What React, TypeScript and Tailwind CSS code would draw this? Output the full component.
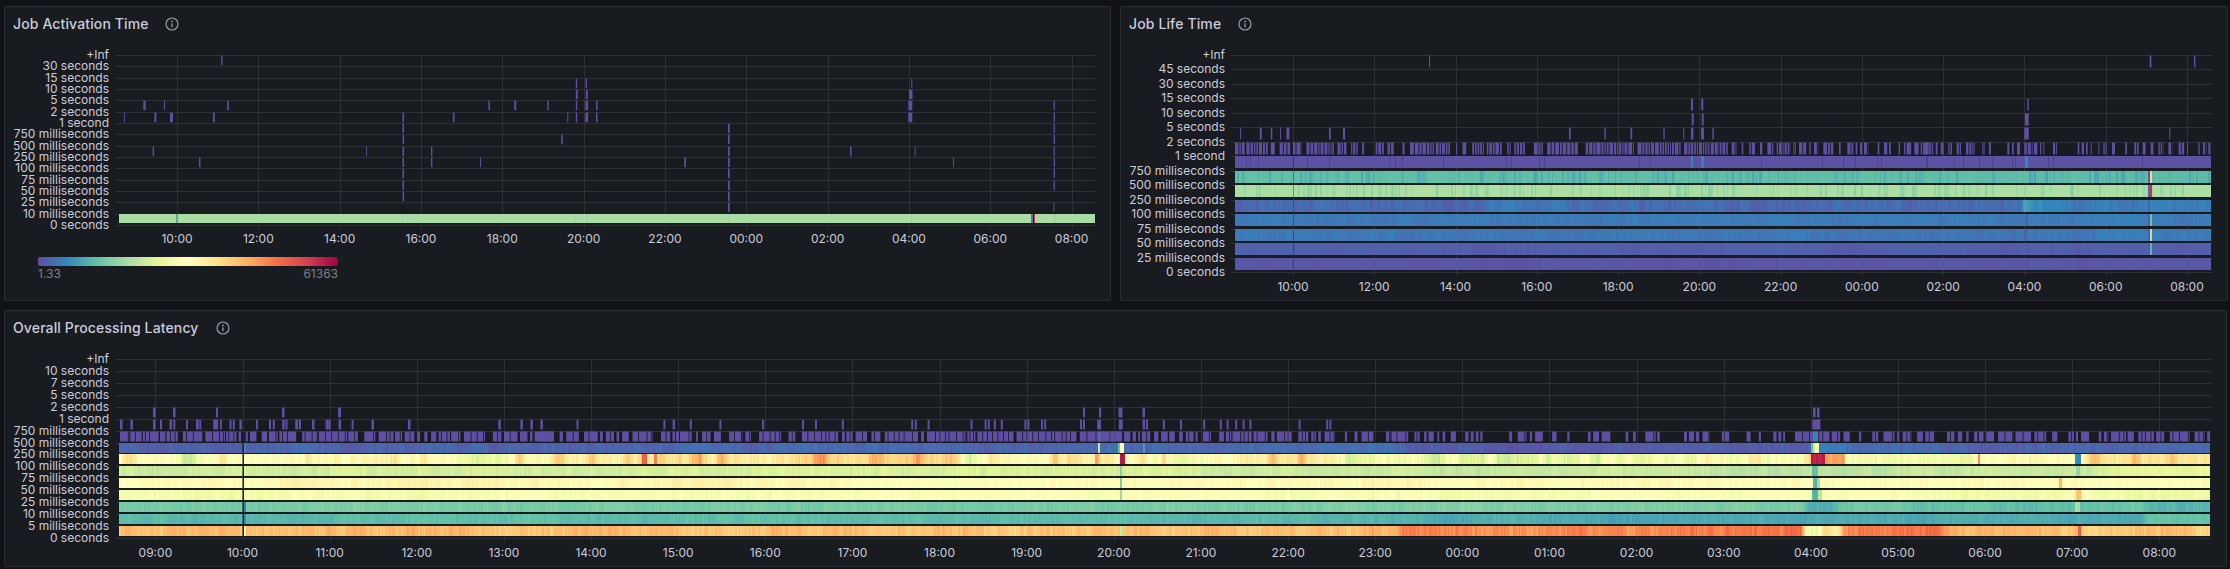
import React from "react";

type Tick = [number, number];
type Spike = [number, number, number];
type Key = [number, number];

const STOPS = [
  [94, 79, 162], [50, 136, 189], [102, 194, 165], [171, 221, 164], [230, 245, 152], [255, 255, 191],
  [254, 224, 139], [253, 174, 97], [244, 109, 67], [213, 62, 79], [158, 1, 66],
];

function spectral(t: number): string {
  const c = Math.max(0, Math.min(0.9999, t)) * 10;
  const i = Math.floor(c);
  const f = c - i;
  const a = STOPS[i];
  const b = STOPS[i + 1];
  const m = (k: number) => Math.round(a[k] + (b[k] - a[k]) * f);
  return `rgb(${m(0)},${m(1)},${m(2)})`;
}

function rng(seed: number) {
  let a = seed >>> 0;
  return () => {
    a = (a + 0x6d2b79f5) >>> 0;
    let t = a;
    t = Math.imul(t ^ (t >>> 15), t | 1);
    t ^= t + Math.imul(t ^ (t >>> 7), t | 61);
    return ((t ^ (t >>> 14)) >>> 0) / 4294967296;
  };
}

function keyAt(keys: Key[], x: number): number {
  if (x <= keys[0][0]) return keys[0][1];
  for (let i = 1; i < keys.length; i++) {
    if (x <= keys[i][0]) {
      const [x0, t0] = keys[i - 1];
      const [x1, t1] = keys[i];
      return t0 + ((t1 - t0) * (x - x0)) / Math.max(0.001, x1 - x0);
    }
  }
  return keys[keys.length - 1][1];
}

type BandOpts = {
  x0: number; x1: number; y: number; h: number; cell: number; seed: number;
  keys: Key[]; amp: number; spikes?: Spike[]; stripeP?: number; stripeD?: number; burstP?: number; burstD?: number;
};

function Band({ x0, x1, y, h, cell, seed, keys, amp, spikes = [], stripeP = 0, stripeD = 0, burstP = 0, burstD = 0 }: BandOpts) {
  const r = rng(seed);
  const n = Math.ceil((x1 - x0) / cell) + 2;
  const white = Array.from({ length: n }, () => r() * 2 - 1);
  const stripe = Array.from({ length: n }, () => (r() < stripeP ? stripeD * (0.5 + r() * 0.5) : 0));
  const midN = Array.from({ length: Math.ceil(n / 6) + 2 }, () => r() * 2 - 1);
  const slowN = Array.from({ length: Math.ceil(n / 40) + 2 }, () => r() * 2 - 1);
  const burst = Array.from({ length: Math.ceil(n / 5) + 2 }, () => (r() < burstP ? burstD * (0.4 + r() * 0.6) : 0));
  const interp = (arr: number[], p: number) => {
    const i = Math.floor(p);
    const f = p - i;
    return arr[i] * (1 - f) + arr[i + 1] * f;
  };
  const rects: React.ReactElement[] = [];
  let start = x0;
  let cur = "";
  const push = (end: number) => {
    if (cur && end > start) rects.push(<rect key={start} x={start} y={y} width={end - start} height={h} fill={cur} />);
  };
  for (let x = x0; x < x1; x++) {
    const c = Math.floor((x - x0) / cell);
    let t =
      keyAt(keys, x) +
      amp * (0.45 * white[c] + 0.35 * interp(midN, c / 6) + 0.35 * interp(slowN, c / 40)) +
      stripe[c] +
      interp(burst, c / 5);
    for (const s of spikes) if (x >= s[0] && x < s[1]) t = s[2] + amp * 0.3 * white[c];
    const col = spectral(Math.round(t * 200) / 200);
    if (col !== cur) {
      push(x);
      start = x;
      cur = col;
    }
  }
  push(x1);
  return <g shapeRendering="crispEdges">{rects}</g>;
}

function blockTicks(blocks: number[][], sc: number, off: number, seed: number, minRun: number, maxRun: number, gap: number): Tick[] {
  const r = rng(seed);
  const out: Tick[] = [];
  for (const [a, b] of blocks) {
    let x = a / sc + off;
    const end = b / sc + off;
    while (x < end) {
      const w = minRun + r() * (maxRun - minRun);
      const e = Math.min(end, x + w);
      out.push([x, e - x]);
      x = e + gap;
    }
  }
  return out;
}

function Ticks({ ticks, y, h, t = 0 }: { ticks: Tick[]; y: number; h: number; t?: number }) {
  return (
    <g fill={spectral(t)}>
      {ticks.map(([x, w], i) => (
        <rect key={i} x={x} y={y} width={w} height={h} />
      ))}
    </g>
  );
}

function Axes({ left, gridL, gridR, gridT, ys, labels, hours, labelY }: {
  left: number; gridL: number; gridR: number; gridT: number; ys: number[]; labels: string[]; hours: [string, number][]; labelY: number;
}) {
  const bottom = ys[ys.length - 1];
  return (
    <>
      <g shapeRendering="crispEdges" stroke="#2e3035" strokeWidth={1}>
        {ys.map((y) => <line key={y} x1={gridL} x2={gridR} y1={y + 0.5} y2={y + 0.5} />)}
        {hours.map(([l, x]) => {
          const px = Math.round(x) + 0.5;
          return <line key={l} x1={px} x2={px} y1={gridT + 0.5} y2={bottom + 4} />;
        })}
      </g>
      <g className="fill-[#ccccdc] text-[12px]">
        {labels.map((l, i) => (
          <text key={l} x={left} y={ys[i] + 4} textAnchor="end">{l}</text>
        ))}
        {hours.map(([l, x]) => (
          <text key={l} x={x} y={labelY + 4} textAnchor="middle">{l}</text>
        ))}
      </g>
    </>
  );
}

function InfoIcon() {
  return (
    <svg width="14" height="14" viewBox="0 0 14 14" fill="none" className="block">
      <circle cx="7" cy="7" r="6" stroke="#9c9ca6" strokeWidth="1.2" />
      <circle cx="7" cy="4.4" r="0.85" fill="#9c9ca6" />
      <rect x="6.35" y="6.2" width="1.3" height="4" rx="0.5" fill="#9c9ca6" />
    </svg>
  );
}

function Panel({ title, iconGap, className, children }: { title: string; iconGap: string; className: string; children: React.ReactNode }) {
  return (
    <div className={`border border-[#2b2d32] rounded-[2px] bg-[#181b1f] flex flex-col overflow-hidden ${className}`}>
      <div className="h-[33px] shrink-0 pl-[8px] flex items-center">
        <h2 className="text-[14px] font-medium text-[#ccccdc] tracking-[0.13px]">{title}</h2>
        <div className={iconGap}><InfoIcon /></div>
      </div>
      {children}
    </div>
  );
}

/* ---------- Panel 1 ---------- */
const P1Y = Array.from({ length: 16 }, (_, i) => Math.round(55 + 11.333 * i));
const P1L = ["+Inf", "30 seconds", "15 seconds", "10 seconds", "5 seconds", "2 seconds", "1 second", "750 milliseconds", "500 milliseconds", "250 milliseconds", "100 milliseconds", "75 milliseconds", "50 milliseconds", "25 milliseconds", "10 milliseconds", "0 seconds"];
const P1H: [string, number][] = ["10:00", "12:00", "14:00", "16:00", "18:00", "20:00", "22:00", "00:00", "02:00", "04:00", "06:00", "08:00"].map((l, i) => [l, 177 + i * 81.33]);
const A: Tick = [402.5, 1.6];
const B: Tick = [728, 1.7];
const C: Tick = [1053.6, 1.3];
const P1T: Tick[][] = [
  [[221.2, 1.3]],
  [],
  [[575.8, 1.4], [585.7, 1.3], [911.3, 1]],
  [[575.8, 2], [585.8, 2], [909, 3.5]],
  [[143.3, 2.4], [164, 1], [227.1, 1.7], [488.4, 1.5], [514.2, 2], [547.3, 1.4], [575.8, 1.4], [585.3, 2.8], [596, 1.5], [908.3, 4], C],
  [[124, 0.9], [154.4, 2], [170, 3], [212.9, 1.8], A, [452.9, 1.6], [567.3, 1], [575.8, 1.4], [585.3, 2.8], [596, 1.5], [908.3, 4], C],
  [A, B, C],
  [A, [561.2, 1.6], B, C],
  [[152.6, 1.4], [366, 0.9], A, [431, 1.4], B, [850, 1.5], [914.7, 0.9], C],
  [[199, 1.5], A, [431, 1.4], [480, 1], [684.3, 1.7], B, [953, 0.9], C],
  [A, B, C],
  [A, B, C],
  [A, B],
  [B, [1053.4, 1]],
];

/* ---------- Panel 2 ---------- */
const P2Y = Array.from({ length: 16 }, (_, i) => Math.round(55 + 14.47 * i));
const P2L = ["+Inf", "45 seconds", "30 seconds", "15 seconds", "10 seconds", "5 seconds", "2 seconds", "1 second", "750 milliseconds", "500 milliseconds", "250 milliseconds", "100 milliseconds", "75 milliseconds", "50 milliseconds", "25 milliseconds", "0 seconds"];
const P2H: [string, number][] = ["10:00", "12:00", "14:00", "16:00", "18:00", "20:00", "22:00", "00:00", "02:00", "04:00", "06:00", "08:00"].map((l, i) => [l, 1293 + i * 81.27]);
const P2T0: Tick[] = [[1429, 1], [2149.6, 1.8], [2194, 1.4]];
const P2T3: Tick[] = [[1691, 2], [1701.3, 2], [2027.3, 1.5]];
const P2T4: Tick[] = [[1691.7, 2], [1701.7, 2], [2025, 3.8]];
const P2T5: Tick[] = [[1240.1, 1], [1259.8, 2], [1270.8, 1.5], [1280, 1], [1286.4, 3], [1329, 1.8], [1343, 2], [1569, 1.8], [1604.4, 1.4], [1630.4, 1.8], [1663.4, 1.3], [1683.3, 1], [1691, 2.4], [1701, 3], [1712.4, 1.4], [2024.3, 4.5], [2169.3, 1]];
const P2R6: Tick[] = [
  ...blockTicks([[378, 405], [410, 470], [478, 490], [503, 535], [540, 565], [578, 655], [665, 690], [703, 722], [734, 742], [772, 795], [805, 825], [847, 855], [868, 935], [940, 980], [997, 1000], [1015, 1028], [1042, 1075], [1083, 1125], [1140, 1150], [1160, 1190], [1215, 1240], [1252, 1338], [1360, 1495], [1505, 1568]], 2.8, 1100, 71, 1, 4.2, 0.9),
  ...blockTicks([[0, 62], [72, 90], [92, 140], [143, 148], [152, 178], [180, 204], [215, 232], [245, 250], [268, 285], [300, 307], [322, 340], [350, 392], [400, 408], [417, 440], [448, 452], [462, 475], [490, 520], [537, 542], [562, 580], [587, 592], [600, 606], [612, 625], [653, 658], [672, 682], [687, 693], [716, 720], [750, 755], [763, 770], [794, 810], [827, 833], [842, 848], [856, 720]], 3, 1660, 72, 1, 4, 0.9),
  ...blockTicks([[12, 16], [20, 30], [48, 56], [62, 102], [127, 131], [145, 156], [170, 183], [198, 225], [247, 255], [267, 273], [322, 328], [336, 342], [351, 360], [373, 398], [402, 412], [420, 424], [430, 433], [459, 471], [533, 538], [545, 553], [558, 563], [572, 575], [595, 598], [610, 620], [636, 645], [676, 681], [703, 716], [728, 738], [752, 760], [775, 790], [805, 817], [836, 855], [861, 866], [895, 899], [909, 919], [925, 933]], 3, 1900, 73, 1, 3.5, 0.9),
];
const P2Slits = [410, 420, 443, 540, 580, 642, 810, 826, 845, 961, 1138, 1152, 1228, 1244, 1510].map((v) => v / 2.8 + 1100)
  .concat([31, 364, 547, 610, 646, 710, 724, 858].map((v) => v / 3 + 1640))
  .concat([80, 163, 190, 238, 275, 335, 345, 445, 460, 727].map((v) => v / 3 + 1900));

/* ---------- Panel 3 ---------- */
const P3Y = Array.from({ length: 16 }, (_, i) => Math.round(359 + 11.93 * i));
const P3L = ["+Inf", "10 seconds", "7 seconds", "5 seconds", "2 seconds", "1 second", "750 milliseconds", "500 milliseconds", "250 milliseconds", "100 milliseconds", "75 milliseconds", "50 milliseconds", "25 milliseconds", "10 milliseconds", "5 milliseconds", "0 seconds"];
const P3H: [string, number][] = ["09:00", "10:00", "11:00", "12:00", "13:00", "14:00", "15:00", "16:00", "17:00", "18:00", "19:00", "20:00", "21:00", "22:00", "23:00", "00:00", "01:00", "02:00", "03:00", "04:00", "05:00", "06:00", "07:00", "08:00"].map((l, i) => [l, 155.4 + i * 87.13]);
const P3R4: Tick[] = [[153, 2.5], [173, 2.5], [216, 2], [282, 2.5], [338, 3], [1083, 2], [1099, 2.2], [1118.5, 4], [1142.5, 2.5], [1813, 2.6], [1817, 2.6]];
const P3R5: Tick[] = [
  [120, 2.5], [130.4, 2.5], [153, 2.5], [160, 2], [169.5, 2.5], [173.3, 2], [186, 2], [196, 2.8], [199.4, 1.8], [213.2, 2.8], [216, 2], [219.8, 2], [229.5, 2], [232.8, 2], [239.4, 2.5], [256, 2], [269, 2], [272.8, 2], [282.2, 2.5], [285.5, 2], [295.2, 3], [299, 2], [312, 2.5], [325.6, 3], [328.6, 2], [338.6, 2.5], [351.6, 2], [371.5, 2.5], [408, 2.5], [498.3, 2.5], [520.4, 2.5], [530.4, 2.5], [540.4, 2.5],
  [576.5, 2], [663.4, 2], [672.6, 2.5], [689.8, 2], [719.4, 2], [762, 2], [802, 2], [815, 2], [841.8, 2], [911.2, 2], [914.8, 2], [927.6, 2], [970.5, 2], [984.6, 2], [987.8, 2], [993.8, 2], [1000.8, 2], [1024.4, 2], [1027.4, 2], [1041, 2], [1044.2, 2], [1080, 2], [1083, 2], [1097.2, 3.8], [1118.8, 4],
  [1142.6, 2.5], [1146, 2], [1162.8, 2], [1180, 2], [1203.2, 2], [1219.8, 2], [1226.6, 2], [1235.2, 2], [1242.6, 2], [1249.4, 2], [1298.6, 2], [1326.2, 2], [1329.4, 2], [1812.4, 8],
];
const P3R6: Tick[] = [
  ...blockTicks([[336, 362], [365, 398], [400, 445], [448, 463], [466, 500], [512, 568], [575, 630], [633, 662], [668, 675], [688, 694], [700, 718], [733, 748], [753, 778], [782, 830], [846, 890], [893, 972], [975, 1002], [1020, 1051], [1060, 1102], [1106, 1126], [1133, 1160], [1168, 1176], [1188, 1197], [1207, 1224], [1228, 1260], [1263, 1289], [1299, 1358], [1380, 1404], [1411, 1449], [1456, 1477], [1484, 1491], [1497, 1551]], 2.8, 0, 81, 2, 9, 0.8),
  ...blockTicks([[0, 38], [53, 62], [71, 105], [119, 156], [162, 170], [178, 200], [207, 214], [222, 240], [250, 304], [327, 352], [358, 410], [422, 427], [438, 463], [470, 491], [511, 547], [555, 570], [592, 652], [672, 690], [708, 806], [816, 824], [828, 845], [853, 884], [896, 920], [932, 1022], [1030, 1038], [1046, 1150], [1155, 1177], [1182, 1280], [1288, 1450], [1459, 1540], [1542, 1568]], 2.703, 540, 82, 2, 9, 0.8),
  ...blockTicks([[0, 20], [28, 44], [48, 60], [65, 82], [88, 97], [103, 108], [113, 138], [146, 158], [165, 183], [187, 203], [214, 224], [232, 253], [258, 264], [278, 300], [322, 335], [340, 355], [358, 410], [415, 453], [463, 472], [478, 498], [500, 518], [536, 563], [571, 584], [590, 597], [607, 635], [662, 668], [688, 698], [707, 739], [773, 785], [788, 833], [850, 864], [876, 883], [888, 903], [912, 917], [926, 933], [948, 962], [987, 996], [1002, 1010], [1016, 1024], [1028, 1034], [1106, 1116], [1129, 1153], [1162, 1168], [1176, 1199], [1222, 1234], [1263, 1269], [1319, 1326], [1333, 1349], [1356, 1380], [1421, 1428], [1441, 1448], [1474, 1502], [1506, 1513]], 2.703, 1100, 83, 2, 9, 0.8),
  ...blockTicks([[92, 100], [105, 119], [124, 133], [142, 161], [194, 214], [261, 273], [294, 300], [333, 342], [347, 355], [360, 365], [392, 485], [491, 514], [523, 540], [565, 571], [601, 617], [631, 661], [668, 674], [683, 707], [722, 740], [744, 768], [803, 825], [832, 844], [855, 861], [876, 885], [889, 903], [909, 930], [941, 982], [988, 1030], [1039, 1071], [1087, 1101], [1131, 1146], [1151, 1158], [1165, 1187], [1213, 1220], [1227, 1239], [1246, 1287], [1291, 1308], [1320, 1362], [1368, 1390], [1405, 1459], [1472, 1499], [1506, 1514]], 2.703, 1650, 84, 2, 9, 0.8),
];

type Row = { keys: Key[]; amp: number; spikes?: Spike[]; stripeP?: number; stripeD?: number; burstP?: number; burstD?: number };

const P3Rows: Row[] = [
  { keys: [[119, 0.035], [1400, 0.05], [1410, 0.018], [1805, 0.02], [1822, 0.08], [1855, 0.055], [1960, 0.03], [2110, 0.04], [2210, 0.05]], amp: 0.032,
    spikes: [[244, 246, 0.1], [1098, 1100, 0.33], [1118, 1120, 0.2], [1120, 1124, 0.5], [1143, 1145, 0.14], [1811, 1813, 0.2], [1813, 1815, 0.35], [1815, 1819, 0.48]] },
  { keys: [[119, 0.5], [180, 0.5], [182, 0.39], [196, 0.39], [198, 0.47], [300, 0.5], [440, 0.53], [470, 0.42], [500, 0.42], [520, 0.52], [640, 0.54], [770, 0.56], [850, 0.6], [905, 0.64], [955, 0.63], [970, 0.36], [982, 0.5], [1100, 0.58], [1125, 0.5], [1190, 0.42], [1220, 0.53], [1285, 0.58], [1340, 0.54], [1346, 0.39], [1415, 0.46], [1430, 0.38], [1500, 0.38], [1720, 0.42], [1800, 0.47], [1846, 0.45], [1950, 0.44], [1975, 0.38], [1980, 0.5], [2075, 0.5], [2090, 0.57], [2210, 0.58]], amp: 0.065, burstP: 0.2, burstD: 0.15,
    spikes: [[642, 647, 0.82], [654, 657, 0.78], [1120, 1125, 0.96], [1095, 1099, 0.72], [1811, 1825, 0.94], [1825, 1845, 0.72], [2075, 2081, 0.11], [1978, 1980, 0.74]] },
  { keys: [[119, 0.36], [660, 0.38], [1100, 0.38], [1400, 0.35], [1800, 0.33], [2000, 0.34], [2100, 0.36], [2135, 0.4], [2210, 0.41]], amp: 0.042,
    spikes: [[1120, 1122, 0.26], [1812, 1818, 0.2], [2076, 2080, 0.27]] },
  { keys: [[119, 0.505], [400, 0.52], [720, 0.53], [1000, 0.49], [1200, 0.52], [1700, 0.51], [2210, 0.49]], amp: 0.042,
    spikes: [[1120, 1122, 0.24], [1813, 1817, 0.17], [1817, 1820, 0.3], [2059, 2062, 0.67]] },
  { keys: [[119, 0.47], [400, 0.47], [1000, 0.49], [1400, 0.47], [1800, 0.49], [2210, 0.43]], amp: 0.05,
    spikes: [[1120, 1122, 0.28], [1812, 1818, 0.17], [1818, 1822, 0.34], [2076, 2081, 0.66]] },
  { keys: [[119, 0.225], [1800, 0.235], [1810, 0.16], [1830, 0.16], [1850, 0.22], [1950, 0.21], [2020, 0.2], [2100, 0.2], [2140, 0.22], [2150, 0.175], [2210, 0.17]], amp: 0.03,
    spikes: [[244, 246, 0.1], [2075, 2080, 0.3]] },
  { keys: [[119, 0.185], [1100, 0.19], [1500, 0.16], [1700, 0.15], [2140, 0.16], [2150, 0.205], [2210, 0.205]], amp: 0.024,
    spikes: [[244, 246, 0.1]] },
  { keys: [[119, 0.67], [1100, 0.66], [1395, 0.68], [1405, 0.76], [1600, 0.75], [1800, 0.79], [1807, 0.45], [1818, 0.45], [1822, 0.58], [1838, 0.58], [1845, 0.77], [1940, 0.79], [1950, 0.69], [2075, 0.67], [2090, 0.65], [2160, 0.65], [2210, 0.61]], amp: 0.06,
    spikes: [[244, 246, 0.48], [1120, 1123, 0.36], [2078, 2081, 0.84]] },
];

const P2Rows: Row[] = [
  { keys: [[1235, 0.004]], amp: 0.002, spikes: [[1691, 1693, 0.09], [1701, 1704, 0.09], [2025, 2028, 0.1], [2149, 2151, 0]] },
  { keys: [[1235, 0.195], [2211, 0.19]], amp: 0.008, stripeP: 0.24, stripeD: -0.04, spikes: [[2148, 2150, 0.02], [2150, 2152, 0.62]] },
  { keys: [[1235, 0.305], [2211, 0.305]], amp: 0.01, stripeP: 0.22, stripeD: -0.05, spikes: [[2148, 2150, 0.05], [2150, 2152, 0.92]] },
  { keys: [[1235, 0.045], [1480, 0.05], [1490, 0.08], [1700, 0.05], [2020, 0.045], [2024, 0.15], [2030, 0.09], [2090, 0.055], [2100, 0.075], [2211, 0.075]], amp: 0.035, spikes: [[2148, 2150, 0.03]] },
  { keys: [[1235, 0.075], [2211, 0.08]], amp: 0.018, spikes: [[2025, 2028, 0.035], [2148, 2150, 0.02], [2150, 2152, 0.2]] },
  { keys: [[1235, 0.068], [2211, 0.072]], amp: 0.02, spikes: [[2024, 2027, 0.035], [2148, 2150, 0.02], [2150, 2152, 0.32]] },
  { keys: [[1235, 0.03], [2211, 0.028]], amp: 0.014, spikes: [[2148, 2150, 0.01], [2150, 2152, 0.18]] },
  { keys: [[1235, 0.01], [2211, 0.01]], amp: 0.01, spikes: [[2148, 2150, 0.001]] },
];

export default function App() {
  return (
    <div className="w-[2230px] h-[569px] bg-[#111217] pt-[6px] pl-[4px] pr-[2px] flex flex-col gap-[9px] overflow-hidden font-['Inter',sans-serif]">
      <div className="flex gap-[9px] h-[295px]">
        <Panel title="Job Activation Time" iconGap="ml-[16px]" className="w-[1107px] shrink-0">
          <svg width="1105" height="210" viewBox="5 40 1105 210" className="block shrink-0">
            <Axes left={109} gridL={116} gridR={1095} gridT={55} ys={P1Y} labels={P1L} hours={P1H} labelY={239} />
            {P1T.map((t, i) => <Ticks key={i} ticks={t} y={P1Y[i] + 0.6} h={9.6} />)}
            <g shapeRendering="crispEdges">
              <rect x={119} y={214} width={976} height={9} fill="#a9dda3" />
              <rect x={176} y={214} width={2} height={9} fill="#5fa98e" />
              <rect x={402} y={214} width={1} height={9} fill="#a0d29f" />
              <rect x={575} y={214} width={1} height={9} fill="#a0d29f" />
              <rect x={586} y={214} width={1} height={9} fill="#a0d29f" />
              <rect x={729} y={214} width={1} height={9} fill="#a0d29f" />
              <rect x={911} y={214} width={1} height={9} fill="#a0d29f" />
              <rect x={1031} y={214} width={2} height={9} fill="#4a7fa8" />
              <rect x={1033} y={214} width={1} height={9} fill="#181b1f" />
              <rect x={1034} y={214} width={1} height={9} fill="#d53e4f" />
              <rect x={1054} y={214} width={1} height={9} fill="#9bc79c" />
            </g>
          </svg>
          <div className="ml-[33px] mt-[7px] w-[300px]">
            <div className="h-[9px] rounded-[2px] bg-[linear-gradient(to_right,#5e4fa2,#3288bd,#66c2a5,#abdda4,#e6f598,#ffffbf,#fee08b,#fdae61,#f46d43,#d53e4f,#9e0142)]" />
            <div className="flex justify-between text-[12px] leading-[14px] mt-[1px] text-[#7f8087]">
              <span>1.33</span>
              <span>61363</span>
            </div>
          </div>
        </Panel>
        <Panel title="Job Life Time" iconGap="ml-[17px]" className="flex-1">
          <svg width="1106" height="260" viewBox="1121 40 1106 260" className="block shrink-0">
            <Axes left={1225} gridL={1231} gridR={2212} gridT={55} ys={P2Y} labels={P2L} hours={P2H} labelY={287} />
            <Ticks ticks={P2T0} y={P2Y[0] + 0.5} h={12} />
            <Ticks ticks={P2T3} y={P2Y[3] + 0.5} h={12} />
            <Ticks ticks={P2T4} y={P2Y[4] + 0.5} h={12} />
            <Ticks ticks={P2T5} y={P2Y[5] + 0.5} h={12} />
            <Ticks ticks={P2R6} y={P2Y[6] + 0.5} h={12} />
            {P2Rows.map((r, i) => (
              <Band key={i} x0={1235} x1={2211} y={P2Y[7 + i]} h={12} cell={1.7} seed={200 + i} {...r} />
            ))}
            <g shapeRendering="crispEdges" fill="#4c4490">
              {P2Slits.map((x) => <rect key={x} x={Math.round(x)} y={P2Y[7]} width={1} height={12} />)}
            </g>
            <g shapeRendering="crispEdges">
              {P2Rows.map((_, i) => (
                <rect key={i} x={1293} y={P2Y[7 + i]} width={1} height={12} fill="#181b1f" opacity={0.4} />
              ))}
            </g>
          </svg>
        </Panel>
      </div>
      <Panel title="Overall Processing Latency" iconGap="ml-[17px]" className="h-[257px] mr-[1px]">
        <svg width="2221" height="222" viewBox="5 344 2221 222" className="block shrink-0">
          <Axes left={109} gridL={116} gridR={2211} gridT={359} ys={P3Y} labels={P3L} hours={P3H} labelY={553} />
          <Ticks ticks={P3R4} y={P3Y[4] + 0.5} h={10} />
          <Ticks ticks={P3R5} y={P3Y[5] + 0.5} h={10} />
          <Ticks ticks={P3R6} y={P3Y[6] + 0.5} h={10} />
          <Ticks ticks={[[1098.7, 1.4], [1813, 5]]} y={P3Y[6] + 0.5} h={10} t={0.09} />
          {P3Rows.map((r, i) => (
            <Band key={i} x0={119} x1={2210} y={P3Y[7 + i]} h={10} cell={1.45} seed={300 + i} {...r} />
          ))}
          <g shapeRendering="crispEdges">
            <rect x={243} y={P3Y[6]} width={1} height={106} fill="#1b2230" />
            <rect x={242} y={P3Y[7]} width={1} height={93} fill="#181b1f" opacity={0.55} />
          </g>
        </svg>
      </Panel>
    </div>
  );
}
